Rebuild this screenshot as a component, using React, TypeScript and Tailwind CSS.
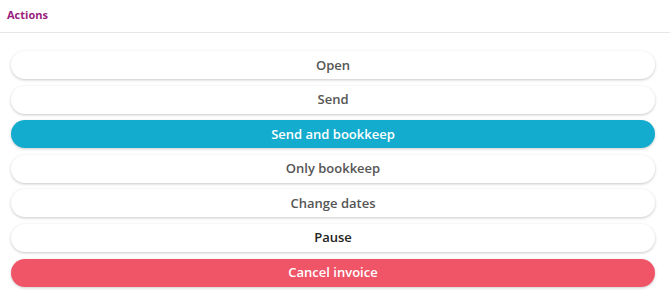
const actions = [
  { label: 'Open', variant: 'default' },
  { label: 'Send', variant: 'default' },
  { label: 'Send and bookkeep', variant: 'primary' },
  { label: 'Only bookkeep', variant: 'default' },
  { label: 'Change dates', variant: 'default' },
  { label: 'Pause', variant: 'dark' },
  { label: 'Cancel invoice', variant: 'danger' },
];

const variantClass: Record<string, string> = {
  default: 'bg-white text-[#555] shadow-[0_1px_3px_rgba(0,0,0,0.22)]',
  dark: 'bg-white text-[#222] shadow-[0_1px_3px_rgba(0,0,0,0.22)]',
  primary: 'bg-[#13acce] text-white shadow-[0_1px_3px_rgba(0,0,0,0.2)]',
  danger: 'bg-[#ef5567] text-white shadow-[0_1px_3px_rgba(0,0,0,0.2)]',
};

export default function App() {
  return (
    <div className="w-[670px] h-[294px] bg-white font-['Open_Sans',sans-serif]">
      <div className="h-[33px] border-b border-[#e6e6e6] px-[7px] pt-[7px]">
        <h3 className="text-[11px] font-bold text-[#9a1d7c] leading-[16px]">Actions</h3>
      </div>
      <div className="flex flex-col gap-[6.6px] pl-[11px] pr-[15px] pt-[18px]">
        {actions.map((a) => (
          <button
            key={a.label}
            type="button"
            className={`h-[28px] w-full rounded-full text-[13px] font-semibold leading-none ${variantClass[a.variant]}`}
          >
            {a.label}
          </button>
        ))}
      </div>
    </div>
  );
}
